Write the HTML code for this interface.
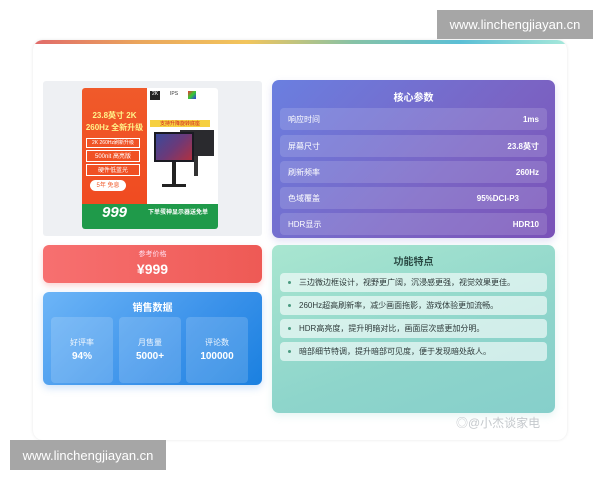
<!DOCTYPE html>
<html><head><meta charset="utf-8"><style>
*{margin:0;padding:0;box-sizing:border-box}
body{width:600px;height:480px;background:#fff;position:relative;overflow:hidden;font-family:"Liberation Sans","Noto Sans CJK SC",sans-serif}
.a{position:absolute}
.wm{background:#a6a6a6;color:#fff;font-size:13px;display:flex;align-items:center;justify-content:center}
.card{left:33px;top:40px;width:534px;height:400px;border-radius:10px;background:#fff;box-shadow:0 0 3px rgba(0,0,0,.1);overflow:hidden}
.bar{left:0;top:0;width:534px;height:4px;background:linear-gradient(90deg,#e16a6a,#eaa65c,#f2c55c,#86c2a6,#5bbfd6,#a6e8da)}
.purple{left:272px;top:80px;width:283px;height:158px;border-radius:7px;background:linear-gradient(135deg,#6a7fe0,#7a64c4 60%,#7a52b8);box-shadow:0 3px 8px rgba(100,100,200,.2)}
.row{position:absolute;left:8px;width:267px;height:22px;border-radius:4px;background:rgba(255,255,255,.14);color:#fff;font-size:8px;display:flex;justify-content:space-between;align-items:center;padding:0 8px}
.row b{font-weight:bold}
.ttl{position:absolute;left:0;width:100%;text-align:center;font-weight:bold;font-size:10px}
.price{left:43px;top:245px;width:219px;height:38px;border-radius:6px;background:linear-gradient(90deg,#f77070,#ee5a55);box-shadow:0 3px 6px rgba(240,90,90,.25)}
.blue{left:43px;top:292px;width:219px;height:93px;border-radius:6px;background:linear-gradient(135deg,#6db5f7,#3b92ea 60%,#1a80e0);box-shadow:0 3px 8px rgba(60,140,230,.25)}
.box{position:absolute;top:25px;width:62px;height:66px;border-radius:4px;background:rgba(255,255,255,.16);color:#fff;text-align:center}
.box .l{font-size:8px;margin-top:20px;opacity:.9}
.box .v{font-size:10px;font-weight:bold;margin-top:3px}
.green{left:272px;top:245px;width:283px;height:168px;border-radius:7px;background:linear-gradient(160deg,#a9e6d0,#8ed5cb 60%,#86cfcb);box-shadow:0 3px 8px rgba(120,200,190,.2)}
.f{position:absolute;left:8px;width:267px;height:19px;border-radius:4px;background:rgba(255,255,255,.6);font-size:8px;color:#2e3a3a;display:flex;align-items:center;padding-left:8px}
.f:before{content:"";width:3px;height:3px;border-radius:50%;background:#4a9a80;margin-right:8px}
</style></head><body>
<div class="a card"><div class="a bar"></div></div>
<div class="a wm" style="left:437px;top:10px;width:156px;height:29px">www.linchengjiayan.cn</div>
<div class="a wm" style="left:10px;top:440px;width:156px;height:30px">www.linchengjiayan.cn</div>

<div class="a" style="left:43px;top:81px;width:219px;height:155px;background:#eef0f3;border-radius:3px"></div>
<div class="a" style="left:82px;top:88px;width:136px;height:141px;border-radius:3px;overflow:hidden;background:#fff">
 <div class="a" style="left:0;top:0;width:65px;height:125px;background:linear-gradient(180deg,#f05a2a,#f04a20)"></div>
 <div class="a" style="left:68px;top:3px;width:10px;height:9px;background:#222;color:#fff;font-size:5px;text-align:center">2K</div>
 <div class="a" style="left:88px;top:3px;width:10px;height:9px;color:#333;font-size:5px">IPS</div>
 <div class="a" style="left:106px;top:3px;width:8px;height:8px;background:linear-gradient(135deg,#e33,#3c3,#33e)"></div>
 <div class="a" style="left:3px;top:22px;width:59px;height:24px;color:#fff48a;font-size:8px;font-weight:bold;line-height:12px;text-align:center">23.8英寸 2K<br>260Hz 全新升级</div>
 <div class="a" style="left:4px;top:50px;width:54px;height:10px;border:1px solid #fff;color:#fff;font-size:5px;text-align:center">2K 260Hz刷新升级</div>
 <div class="a" style="left:4px;top:62px;width:54px;height:12px;border:1px solid #fff;color:#fff;font-size:6px;text-align:center">500nit 高亮版</div>
 <div class="a" style="left:4px;top:76px;width:54px;height:12px;border:1px solid #fff;color:#fff;font-size:6px;text-align:center">硬件低蓝光</div>
 <div class="a" style="left:8px;top:92px;width:36px;height:11px;background:#fff;border-radius:6px;color:#f05a2a;font-size:6px;text-align:center">5年 免息</div>
 <div class="a" style="left:98px;top:42px;width:34px;height:26px;background:#2a2a2e"></div>
 <div class="a" style="left:112px;top:68px;width:4px;height:20px;background:#333"></div>
 <div class="a" style="left:72px;top:44px;width:40px;height:30px;background:#1a1a22"></div>
 <div class="a" style="left:74px;top:46px;width:36px;height:26px;background:linear-gradient(135deg,#3a4a9a,#6a3a7a 50%,#b03040)"></div>
 <div class="a" style="left:90px;top:74px;width:4px;height:22px;background:#222"></div>
 <div class="a" style="left:80px;top:96px;width:24px;height:3px;background:#222"></div>
 <div class="a" style="left:68px;top:32px;width:60px;height:7px;background:#f6d040;color:#d02020;font-size:5px;text-align:center">支持升降旋转底座</div>
 <div class="a" style="left:0;top:116px;width:136px;height:25px;background:#1f9a4a"></div>
 <div class="a" style="left:20px;top:116px;color:#fff;font-size:15px;font-weight:bold;font-style:italic">999</div>
 <div class="a" style="left:66px;top:119px;color:#fff;font-size:6px;font-weight:bold">下单蛋神显示器送免单</div>
</div>

<div class="a purple">
 <div class="ttl" style="top:9px;color:#fff">核心参数</div>
 <div class="row" style="top:28px"><span>响应时间</span><b>1ms</b></div>
 <div class="row" style="top:55px"><span>屏幕尺寸</span><b>23.8英寸</b></div>
 <div class="row" style="top:81px"><span>刷新频率</span><b>260Hz</b></div>
 <div class="row" style="top:107px"><span>色域覆盖</span><b style="margin-right:20px">95%DCI-P3</b></div>
 <div class="row" style="top:133px"><span>HDR显示</span><b>HDR10</b></div>
</div>

<div class="a price">
 <div class="ttl" style="top:4px;color:#fde;font-size:7px;font-weight:normal">参考价格</div>
 <div class="ttl" style="top:16px;color:#fff;font-size:14px">¥999</div>
</div>

<div class="a blue">
 <div class="ttl" style="top:7px;color:#fff">销售数据</div>
 <div class="box" style="left:8px"><div class="l">好评率</div><div class="v">94%</div></div>
 <div class="box" style="left:76px"><div class="l">月售量</div><div class="v">5000+</div></div>
 <div class="box" style="left:143px"><div class="l">评论数</div><div class="v">100000</div></div>
</div>

<div class="a green">
 <div class="ttl" style="top:8px;color:#2a4a44">功能特点</div>
 <div class="f" style="top:28px">三边微边框设计，视野更广阔，沉浸感更强，视觉效果更佳。</div>
 <div class="f" style="top:51px">260Hz超高刷新率，减少画面拖影，游戏体验更加流畅。</div>
 <div class="f" style="top:74px">HDR高亮度，提升明暗对比，画面层次感更加分明。</div>
 <div class="f" style="top:97px">暗部细节特调，提升暗部可见度，便于发现暗处敌人。</div>
</div>
<div class="a" style="left:456px;top:414px;color:#c4c8cc;font-size:12px">◎@小杰谈家电</div>
</body></html>
